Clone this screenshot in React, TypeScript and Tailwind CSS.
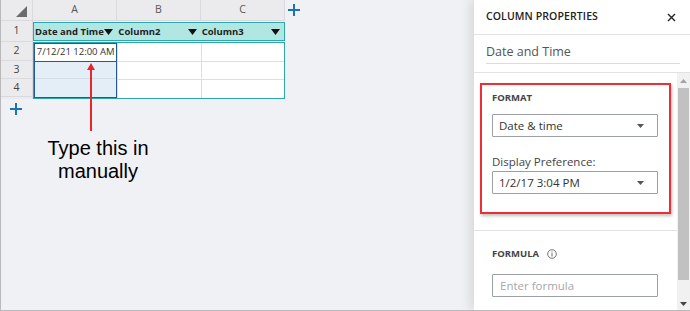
import React from "react";

const Caret = () => (
  <svg width="9" height="6" viewBox="0 0 9 6" className="shrink-0">
    <path d="M0 0 H9 L4.5 6 Z" fill="#111" />
  </svg>
);

const SmallCaret = () => (
  <svg width="7" height="4" viewBox="0 0 7 4" className="shrink-0">
    <path d="M0 0 H7 L3.5 4 Z" fill="#555" />
  </svg>
);

const Plus = () => (
  <svg width="12" height="12" viewBox="0 0 12 12">
    <path d="M6 0 V12 M0 6 H12" stroke="#1b72b8" strokeWidth="2" />
  </svg>
);

export default function App() {
  const ui = { fontFamily: "'Open Sans', 'Noto Sans', sans-serif" };
  return (
    <div
      className="w-[690px] h-[311px] flex bg-[#f0f1f4] border-l border-b border-[#b9b9bb] overflow-hidden"
      style={ui}
    >
      {/* Left spreadsheet area */}
      <div className="flex-1 flex flex-col">
        {/* Column header */}
        <div className="flex h-[21px]">
          <div className="w-[32px] h-full bg-[#ebebee] border-r border-b border-[#dadade] flex items-end justify-end pr-[5px] pb-[3px]">
            <svg width="11" height="11" viewBox="0 0 11 11">
              <path d="M11 0 V11 H0 Z" fill="#6b6b6b" />
            </svg>
          </div>
          {["A", "B", "C"].map((l) => (
            <div
              key={l}
              className="w-[84px] h-full bg-[#ebebee] border-r border-b border-[#dadade] flex items-center justify-center text-[10.5px] text-[#555]"
            >
              {l}
            </div>
          ))}
          <div className="pl-[3px] pt-[4px]">
            <Plus />
          </div>
        </div>
        {/* Body */}
        <div className="flex">
          <div className="w-[32px] flex flex-col bg-[#ebebee] border-r border-[#dadade] text-[10.5px] text-[#444]">
            <div className="h-[21px] border-b border-[#dadade] flex items-center justify-center">1</div>
            <div className="h-[19px] border-b border-[#dadade] flex items-center justify-center">2</div>
            <div className="h-[18px] border-b border-[#dadade] flex items-center justify-center">3</div>
            <div className="h-[18px] border-b border-[#dadade] flex items-center justify-center">4</div>
          </div>
          <div className="flex flex-col">
            {/* teal header */}
            <div className="mt-[1px] h-[19px] w-[252px] border border-[#2ea6ad] bg-[#b1e7e2] flex text-[9.5px] font-bold text-[#222]">
              {["Date and Time", "Column2", "Column3"].map((t) => (
                <div key={t} className="w-[84px] flex items-center justify-between pl-[1px] pr-[4px]">
                  <span className="leading-none whitespace-nowrap">{t}</span>
                  <Caret />
                </div>
              ))}
            </div>
            {/* data block */}
            <div className="mt-[1px] w-[252px] border border-[#2ea6ad] bg-white flex">
              <div className="w-[84px] flex flex-col">
                <div className="h-[19px] border border-[#22598f] flex items-center justify-center text-[9.5px] text-[#333] bg-white whitespace-nowrap">
                  7/12/21 12:00 AM
                </div>
                <div className="h-[36px] border-x border-b border-[#22598f] bg-[#e4eef6] flex flex-col">
                  <div className="h-[17px] border-b border-[#d5dde5]" />
                </div>
              </div>
              {[0, 1].map((c) => (
                <div key={c} className="w-[84px] flex flex-col border-l border-[#dedede]">
                  <div className="h-[19px] border-b border-[#dedede]" />
                  <div className="h-[18px] border-b border-[#dedede]" />
                  <div className="h-[18px]" />
                </div>
              ))}
            </div>
          </div>
        </div>
        <div className="pl-[9px] pt-[4px]">
          <Plus />
        </div>
        {/* annotation */}
        <div className="relative w-[200px] flex flex-col items-center">
          <svg width="12" height="70" viewBox="0 0 12 70" className="absolute left-[84px] top-[-52px]">
            <path d="M6 0 L10 7 H7 V68 H5 V7 H2 Z" fill="#e8262e" />
          </svg>
          <div
            className="mt-[22px] ml-[-6px] text-[20px] leading-[23px] text-black text-center"
            style={{ fontFamily: "'Liberation Sans', Arial, sans-serif" }}
          >
            Type this in
            <br />
            manually
          </div>
        </div>
      </div>

      {/* Right panel */}
      <div className="w-[216px] h-full bg-white flex flex-col shadow-[-4px_0_10px_rgba(0,0,0,0.10)]">
        <div className="h-[35px] shrink-0 border-b border-[#e2e2e4] flex items-center justify-between pl-[12px] pr-[14px]">
          <span className="text-[10.5px] font-semibold text-[#222] tracking-[0.1px]">COLUMN PROPERTIES</span>
          <svg width="9" height="9" viewBox="0 0 9 9">
            <path d="M1 1 L8 8 M8 1 L1 8" stroke="#222" strokeWidth="1.4" />
          </svg>
        </div>
        <div className="h-[38px] shrink-0 border-b border-[#e2e2e4] pl-[12px] pr-[10px] pt-[7px]">
          <div className="h-[22px] border-b border-[#d8dde2] text-[12.5px] text-[#555] leading-[20px]">Date and Time</div>
        </div>
        <div className="flex-1 flex min-h-0">
          <div className="flex-1 flex flex-col">
            <div className="ml-[6px] mt-[10px] w-[191px] h-[131px] border-2 border-[#ea2f35] shadow-[1px_2px_3px_rgba(0,0,0,0.25)] pl-[10px] pr-[11px] pt-[6px]">
              <div className="text-[9.5px] font-bold text-[#444] leading-[14px]">FORMAT</div>
              <div className="mt-[9px] h-[23px] border border-[#9aa0a6] rounded-[1px] flex items-center justify-between pl-[6px] pr-[13px] text-[11.5px] text-[#333]">
                <span>Date &amp; time</span>
                <SmallCaret />
              </div>
              <div className="mt-[18px] text-[11.5px] text-[#444] leading-[14px]">Display Preference:</div>
              <div className="mt-[2px] h-[23px] border border-[#9aa0a6] rounded-[1px] flex items-center justify-between pl-[6px] pr-[13px] text-[11.5px] text-[#333]">
                <span>1/2/17 3:04 PM</span>
                <SmallCaret />
              </div>
            </div>
            <div className="mt-[16px] border-t border-[#e2e2e4] pl-[18px] pr-[19px] pt-[16px]">
              <div className="flex items-center gap-[8px]">
                <span className="text-[9.5px] font-bold text-[#444] leading-[14px]">FORMULA</span>
                <svg width="10" height="10" viewBox="0 0 10 10">
                  <circle cx="5" cy="5" r="4.3" fill="none" stroke="#666" strokeWidth="0.9" />
                  <path d="M5 4.2 V7.5" stroke="#666" strokeWidth="1" />
                  <circle cx="5" cy="2.8" r="0.6" fill="#666" />
                </svg>
              </div>
              <div className="mt-[13px] h-[23px] border border-[#9aa0a6] rounded-[1px] flex items-center pl-[7px] text-[11.5px] text-[#a5a8ab]">
                Enter formula
              </div>
            </div>
          </div>
          {/* scrollbar */}
          <div className="w-[13px] bg-[#f1f1f1] flex flex-col items-center">
            <div className="h-[15px] flex items-center justify-center">
              <svg width="7" height="4" viewBox="0 0 7 4">
                <path d="M0 4 H7 L3.5 0 Z" fill="#a3a3a3" />
              </svg>
            </div>
            <div className="w-[11px] flex-1 bg-[#c1c1c1]" />
            <div className="h-[30px] flex items-end justify-center pb-[4px]">
              <svg width="7" height="4" viewBox="0 0 7 4">
                <path d="M0 0 H7 L3.5 4 Z" fill="#444" />
              </svg>
            </div>
          </div>
        </div>
      </div>
    </div>
  );
}
